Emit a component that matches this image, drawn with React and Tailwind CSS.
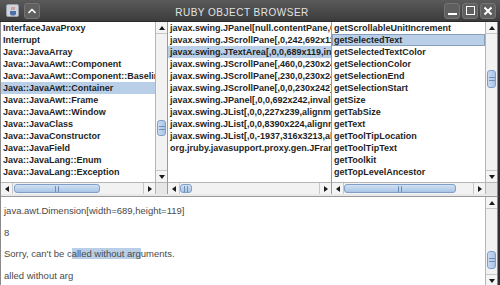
import { ChevronUp } from "lucide-react";

const left = [
  "InterfaceJavaProxy",
  "Interrupt",
  "Java::JavaArray",
  "Java::JavaAwt::Component",
  "Java::JavaAwt::Component::BaselineResizeBehavior",
  "Java::JavaAwt::Container",
  "Java::JavaAwt::Frame",
  "Java::JavaAwt::Window",
  "Java::JavaClass",
  "Java::JavaConstructor",
  "Java::JavaField",
  "Java::JavaLang::Enum",
  "Java::JavaLang::Exception",
];

const middle = [
  "javax.swing.JPanel[null.contentPane,0,0,692x361]",
  "javax.swing.JScrollPane[,0,242,692x119]",
  "javax.swing.JTextArea[,0,0,689x119,invalid]",
  "javax.swing.JScrollPane[,460,0,230x242]",
  "javax.swing.JScrollPane[,230,0,230x242]",
  "javax.swing.JScrollPane[,0,0,230x242]",
  "javax.swing.JPanel[,0,0,692x242,invalid]",
  "javax.swing.JList[,0,0,227x239,alignmentX=0.0]",
  "javax.swing.JList[,0,0,8390x224,alignmentX=0.0]",
  "javax.swing.JList[,0,-1937,316x3213,alignmentX=0.0]",
  "org.jruby.javasupport.proxy.gen.JFrame$Proxy0",
];

const right = [
  "getScrollableUnitIncrement",
  "getSelectedText",
  "getSelectedTextColor",
  "getSelectionColor",
  "getSelectionEnd",
  "getSelectionStart",
  "getSize",
  "getTabSize",
  "getText",
  "getToolTipLocation",
  "getToolTipText",
  "getToolkit",
  "getTopLevelAncestor",
];

function Tri({ dir }) {
  const pts = {
    up: "1,6 4,2 7,6",
    down: "1,2 4,6 7,2",
    left: "6,1 2,4 6,7",
    right: "2,1 6,4 2,7",
  }[dir];
  return (
    <svg width="8" height="8" viewBox="0 0 8 8">
      <polygon points={pts} fill="#1a1a1a" />
    </svg>
  );
}

function ArrowBox({ dir, className = "" }) {
  return (
    <div className={"flex items-center justify-center bg-[#f4f4f4] shrink-0 " + className}>
      <Tri dir={dir} />
    </div>
  );
}

function VScroll({ top, size }) {
  return (
    <div className="w-[12px] shrink-0 flex flex-col bg-[#f2f2f2] border-l border-[#b5b5b5]">
      <ArrowBox dir="up" className="h-[12px] border-b border-[#c8c8c8]" />
      <div className="flex-1 flex flex-col">
        <div style={{ height: top }} />
        <div
          className="mx-[1px] rounded-[3px] border border-[#7f9fc7] bg-gradient-to-r from-[#c9dbf0] to-[#a9c4e6] flex flex-col items-center justify-center gap-[2px]"
          style={{ height: size }}
        >
          <div className="w-[6px] h-px bg-[#6f8fb8]" />
          <div className="w-[6px] h-px bg-[#6f8fb8]" />
        </div>
      </div>
      <ArrowBox dir="down" className="h-[12px] border-t border-[#c8c8c8]" />
    </div>
  );
}

function HScroll({ start, size }) {
  return (
    <div className="h-[12px] flex bg-[#f2f2f2] border-t border-[#b5b5b5]">
      <ArrowBox dir="left" className="w-[12px] border-r border-[#c8c8c8]" />
      <div className="flex-1 flex">
        <div style={{ width: start }} />
        <div
          className="my-[1px] rounded-[3px] border border-[#7f9fc7] bg-gradient-to-b from-[#d2e1f3] to-[#a9c4e6] flex items-center justify-center gap-[2px]"
          style={{ width: size }}
        >
          <div className="h-[6px] w-px bg-[#6f8fb8]" />
          <div className="h-[6px] w-px bg-[#6f8fb8]" />
        </div>
      </div>
      <ArrowBox dir="right" className="w-[12px] border-l border-[#c8c8c8]" />
    </div>
  );
}

function List({ items, selected, focus }) {
  return (
    <div className="flex-1 min-w-0 bg-white overflow-hidden font-['Liberation_Sans',Arial,sans-serif] font-bold text-[9px] text-[#1e1e1e]">
      {items.map((t, i) => (
        <div
          key={t}
          className={
            "h-[12px] leading-[12px] pl-[2px] whitespace-nowrap overflow-hidden " +
            (i === selected
              ? focus
                ? "bg-[#b9cfe7] outline outline-1 -outline-offset-1 outline-[#8a9fbb]"
                : "bg-[#b9cfe7]"
              : "")
          }
        >
          {t}
        </div>
      ))}
    </div>
  );
}

function Pane({ items, selected, focus, width, vscroll, hstart, hsize }) {
  return (
    <div className={"flex flex-col border-r border-[#9a9a9a] " + width}>
      <div className="flex-1 flex min-h-0">
        <List items={items} selected={selected} focus={focus} />
        {vscroll && <VScroll top={vscroll[0]} size={vscroll[1]} />}
      </div>
      <div className="flex">
        <div className="flex-1">
          <HScroll start={hstart} size={hsize} />
        </div>
        {vscroll && <div className="w-[12px] shrink-0 bg-[#e6e6e6] border-t border-l border-[#b5b5b5]" />}
      </div>
    </div>
  );
}

function TitleButton({ children, className = "" }) {
  return (
    <div
      className={
        "w-[16px] h-[16px] shrink-0 rounded-[3px] bg-[#5f5f5f] border border-[#747474] flex justify-center " +
        className
      }
    >
      {children}
    </div>
  );
}

export default function App() {
  return (
    <div className="w-[500px] h-[285px] bg-[#2f2f2f] flex flex-col overflow-hidden">
      <div className="h-[22px] shrink-0 flex items-center bg-gradient-to-b from-[#5a5a5a] to-[#3c3c3c] border-b border-[#2a2a2a] pl-[6px] pr-[4px]">
        <div className="w-[13px] h-[13px] shrink-0 rounded-[2px] bg-[#cfd3da] border border-[#9aa0aa] flex items-center justify-center">
          <svg width="10" height="10" viewBox="0 0 10 10">
            <path d="M2 5h6v2.5a2 2 0 0 1-2 2H4a2 2 0 0 1-2-2z" fill="#4d6fa8" />
            <path d="M4 1c1 1-1 2 0 3M6 1c1 1-1 2 0 3" stroke="#c0504d" strokeWidth="0.8" fill="none" />
          </svg>
        </div>
        <TitleButton className="ml-[5px] items-center">
          <ChevronUp size={12} strokeWidth={3.5} color="#ffffff" />
        </TitleButton>
        <div className="flex-1 flex justify-center pt-[3px]">
          <span className="text-[#e2e2e2] font-['Liberation_Sans',Arial,sans-serif] text-[10px] tracking-[0.5px]">
            RUBY OBJECT BROWSER
          </span>
        </div>
        <div className="flex gap-[2px] shrink-0">
          <TitleButton className="items-end pb-[3px]">
            <div className="w-[9px] h-[2px] bg-white" />
          </TitleButton>
          <TitleButton className="items-center">
            <div className="w-[9px] h-[9px] border-[1.5px] border-white" />
          </TitleButton>
          <TitleButton className="items-center">
            <svg width="10" height="10" viewBox="0 0 10 10">
              <path d="M1.5 1.5l7 7M8.5 1.5l-7 7" stroke="#ffffff" strokeWidth="2" />
            </svg>
          </TitleButton>
        </div>
      </div>

      <div className="flex-1 flex flex-col bg-[#e9e9e9] border-x border-[#8a8a8a] mr-[2px]">
        <div className="h-[172px] flex">
          <Pane
            items={left}
            selected={5}
            width="w-[167px]"
            vscroll={[86, 16]}
            hstart={1}
            hsize={86}
          />
          <Pane items={middle} selected={2} width="w-[164px]" hstart={0} hsize={12} />
          <Pane
            items={right}
            selected={1}
            focus
            width="flex-1 border-r-0"
            vscroll={[36, 18]}
            hstart={0}
            hsize={112}
          />
        </div>
        <div className="flex-1 flex mt-[2px] border-t border-[#9a9a9a] border-b border-b-[#a8b4c4]">
          <div className="flex-1 bg-white pl-[3px] pt-[3px] font-['Liberation_Sans',Arial,sans-serif] text-[9.5px] leading-[21.5px] text-[#4a4a4a] whitespace-nowrap overflow-hidden">
            <div>java.awt.Dimension[width=689,height=119]</div>
            <div>8</div>
            <div>
              Sorry, can't be c<span className="bg-[#b9cfe7]">alled without arg</span>uments.
            </div>
            <div>alled without arg</div>
          </div>
          <VScroll top={42} size={18} />
        </div>
      </div>
    </div>
  );
}
